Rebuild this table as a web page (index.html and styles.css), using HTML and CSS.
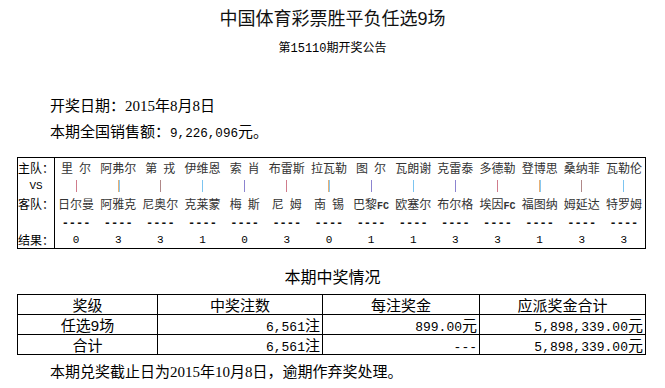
FILE: index.html
```html
<!DOCTYPE html>
<html lang="zh-CN">
<head>
  <meta charset="UTF-8" />
  <title>中国体育彩票胜平负任选9场 第15110期开奖公告</title>
  <link rel="stylesheet" href="styles.css">
</head>
<body>
  <h1 class="title">中国体育彩票胜平负任选<span class="sans">9</span>场</h1>
  <p class="sub">第<span class="mono">15110</span>期开奖公告</p>

  <div class="info">
    <p>开奖日期：<span class="serif">2015</span>年<span class="serif">8</span>月<span class="serif">8</span>日</p>
    <p>本期全国销售额：<span class="mono">9,226,096</span>元。</p>
  </div>

  <div class="matches">
    <div class="col labels">
      <div class="r1">主队：</div>
      <div class="r2 vs">VS</div>
      <div class="r3">客队：</div>
      <div class="r4"></div>
      <div class="r5">结果：</div>
    </div>
    <div class="col"><div class="r1">里&ensp;尔</div><div class="r2"><i class="bar red"></i></div><div class="r3">日尔曼</div><div class="r4 dash">----</div><div class="r5 res">0</div></div>
    <div class="col"><div class="r1">阿弗尔</div><div class="r2"><i class="bar orange"></i></div><div class="r3">阿雅克</div><div class="r4 dash">----</div><div class="r5 res">3</div></div>
    <div class="col"><div class="r1">第&ensp;戎</div><div class="r2"><i class="bar brown"></i></div><div class="r3">尼奥尔</div><div class="r4 dash">----</div><div class="r5 res">3</div></div>
    <div class="col"><div class="r1">伊维恩</div><div class="r2"><i class="bar blue"></i></div><div class="r3">克莱蒙</div><div class="r4 dash">----</div><div class="r5 res">1</div></div>
    <div class="col"><div class="r1">索&ensp;肖</div><div class="r2"><i class="bar purple"></i></div><div class="r3">梅&ensp;斯</div><div class="r4 dash">----</div><div class="r5 res">0</div></div>
    <div class="col"><div class="r1">布雷斯</div><div class="r2"><i class="bar red"></i></div><div class="r3">尼&ensp;姆</div><div class="r4 dash">----</div><div class="r5 res">3</div></div>
    <div class="col"><div class="r1">拉瓦勒</div><div class="r2"><i class="bar orange"></i></div><div class="r3">南&ensp;锡</div><div class="r4 dash">----</div><div class="r5 res">0</div></div>
    <div class="col"><div class="r1">图&ensp;尔</div><div class="r2"><i class="bar purple"></i></div><div class="r3">巴黎<span class="fc">FC</span></div><div class="r4 dash">----</div><div class="r5 res">1</div></div>
    <div class="col"><div class="r1">瓦朗谢</div><div class="r2"><i class="bar blue"></i></div><div class="r3">欧塞尔</div><div class="r4 dash">----</div><div class="r5 res">1</div></div>
    <div class="col"><div class="r1">克雷泰</div><div class="r2"><i class="bar purple"></i></div><div class="r3">布尔格</div><div class="r4 dash">----</div><div class="r5 res">3</div></div>
    <div class="col"><div class="r1">多德勒</div><div class="r2"><i class="bar red"></i></div><div class="r3">埃因<span class="fc">FC</span></div><div class="r4 dash">----</div><div class="r5 res">3</div></div>
    <div class="col"><div class="r1">登博思</div><div class="r2"><i class="bar orange"></i></div><div class="r3">福图纳</div><div class="r4 dash">----</div><div class="r5 res">1</div></div>
    <div class="col"><div class="r1">桑纳菲</div><div class="r2"><i class="bar brown"></i></div><div class="r3">姆延达</div><div class="r4 dash">----</div><div class="r5 res">3</div></div>
    <div class="col"><div class="r1">瓦勒伦</div><div class="r2"><i class="bar blue"></i></div><div class="r3">特罗姆</div><div class="r4 dash">----</div><div class="r5 res">3</div></div>
  </div>

  <h2 class="prize-title">本期中奖情况</h2>
  <table class="prize">
    <colgroup>
      <col class="c1"><col class="c2"><col class="c3"><col class="c4">
    </colgroup>
    <tr>
      <th>奖级</th><th>中奖注数</th><th>每注奖金</th><th>应派奖金合计</th>
    </tr>
    <tr>
      <td class="center">任选<span class="sans">9</span>场</td>
      <td class="right"><span class="mono">6,561</span>注</td>
      <td class="right"><span class="mono">899.00</span>元</td>
      <td class="right"><span class="mono">5,898,339.00</span>元</td>
    </tr>
    <tr>
      <td class="center">合计</td>
      <td class="right"><span class="mono">6,561</span>注</td>
      <td class="right"><span class="mono">---</span></td>
      <td class="right"><span class="mono">5,898,339.00</span>元</td>
    </tr>
  </table>

  <p class="note">本期兑奖截止日为<span class="serif">2015</span>年<span class="serif">10</span>月<span class="serif">8</span>日，逾期作弃奖处理。</p>
</body>
</html>
```

FILE: styles.css
```css
body {
  margin: 0;
  background-color: #fff;
  color: #000;
  font-family: "Noto Sans CJK SC", sans-serif;
}

p, h1, h2 {
  margin: 0;
  font-weight: normal;
}

/* latin runs inside chinese lines; line-height 0 keeps the line box from growing */
.serif,
.sans,
.mono,
.fc {
  line-height: 0;
}

.serif {
  font-family: "Liberation Serif", serif;
}

.sans {
  font-family: "Liberation Sans", sans-serif;
}

.mono {
  font-family: "Liberation Mono", monospace;
  font-size: 0.84em;
}

.title {
  height: 22px;
  margin-top: 6px;
  font-size: 18px;
  line-height: 22px;
  text-align: center;
  color: #111;
}

.sub {
  height: 16px;
  margin-top: 11px;
  font-size: 12px;
  line-height: 16px;
  text-align: center;
}

.sub .mono {
  font-size: 12px;
}

.info {
  margin-top: 37px;
  padding-left: 50px;
  font-size: 15px;
  line-height: 26px;
}

.info p {
  height: 26px;
}

/* match grid */
.matches {
  display: flex;
  box-sizing: border-box;
  width: 629px;
  margin: 13px 0 0 17px;
  border: 1px solid #000;
}

.col {
  flex: 1;
  display: flex;
  flex-direction: column;
  align-items: center;
  font-size: 12px;
  color: #333;
  white-space: nowrap;
}

.col.labels {
  flex: 0 0 35px;
  box-sizing: border-box;
  border-right: 1px solid #000;
  align-items: flex-start;
  color: #000;
}

.r1 { height: 19px; line-height: 19px; }
.r2 { height: 18px; line-height: 18px; }
.r3 { height: 17px; line-height: 17px; }
.r4 { height: 18px; line-height: 24px; }
.r5 { height: 18px; line-height: 20px; }

.labels .vs {
  align-self: center;
  font-family: "Liberation Mono", monospace;
  font-size: 11px;
}

.fc {
  font-family: "Liberation Mono", monospace;
  font-size: 10px;
  font-weight: bold;
}

.bar {
  display: inline-block;
  width: 1px;
  height: 12px;
  margin-top: 3px;
  vertical-align: top;
}

.bar.red { background-color: #d07c8c; }
.bar.orange { background-color: #e8b074; box-shadow: 1px 0 0 #88c8f0; }
.bar.brown { background-color: #b08888; }
.bar.blue { background-color: #7cc4f0; }
.bar.purple { background-color: #8c84d0; }

.dash {
  font-family: "Liberation Mono", monospace;
  font-size: 12px;
  font-weight: bold;
  color: #111;
}

.res {
  font-family: "Liberation Mono", monospace;
  font-size: 11px;
  color: #000;
}

/* prize table */
.prize-title {
  height: 20px;
  margin-top: 17px;
  font-size: 16px;
  line-height: 20px;
  text-align: center;
}

.prize {
  margin: 8px 0 0 17px;
  width: 628px;
  border-collapse: collapse;
  table-layout: fixed;
  font-size: 15px;
}

.prize .c1 { width: 140px; }
.prize .c2 { width: 165px; }
.prize .c3 { width: 157px; }
.prize .c4 { width: 166px; }

.prize th,
.prize td {
  height: 19px;
  padding: 0 2px;
  border: 1px solid #000;
  line-height: 19px;
  font-weight: normal;
  white-space: nowrap;
}

.prize .mono {
  font-size: 13px;
}

.prize .center {
  text-align: center;
}

.prize .right {
  text-align: right;
}

.note {
  height: 20px;
  margin-top: 6px;
  padding-left: 50px;
  font-size: 15px;
  line-height: 20px;
}
```
